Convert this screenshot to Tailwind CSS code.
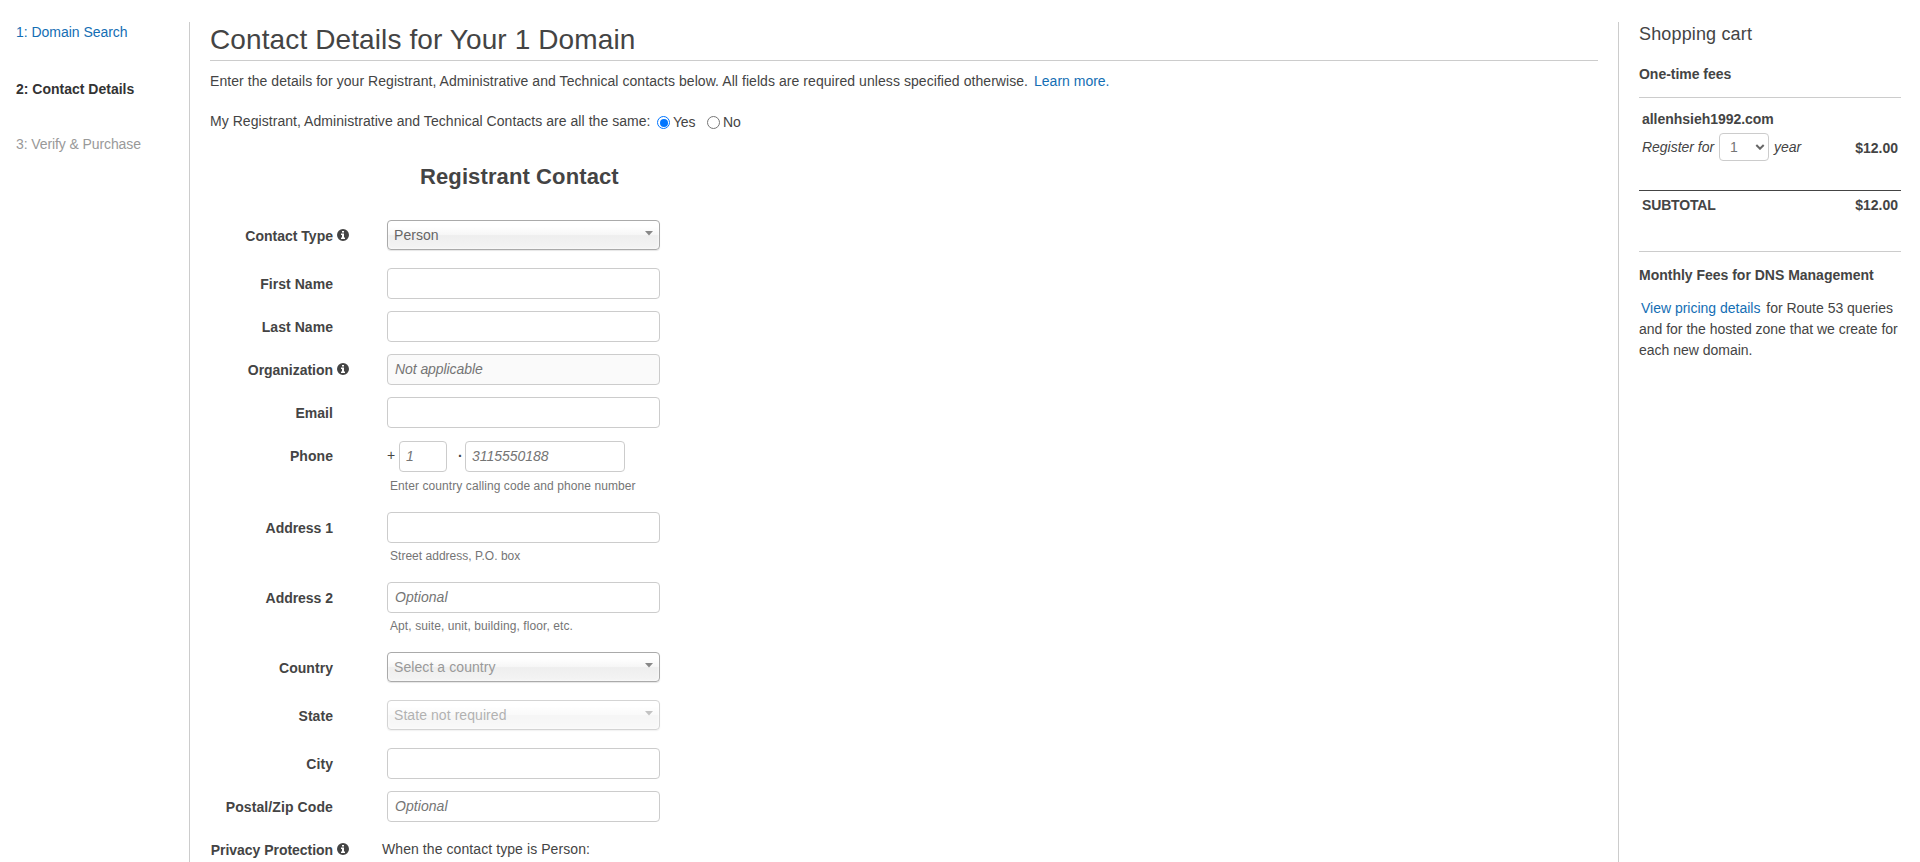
<!DOCTYPE html>
<html lang="en">
<head>
<meta charset="utf-8">
<title>Contact Details</title>
<script src="https://cdn.jsdelivr.net/npm/@tailwindcss/browser@4"></script>
</head>
<body class="bg-white">
<svg class="hidden">
  <symbol id="info" viewBox="0 0 12 12">
    <path fill-rule="evenodd" fill="#444" d="M6 0a6 6 0 1 0 0 12A6 6 0 0 0 6 0ZM5 2h2v1.500H5ZM4 4.500h3v4h1V10H4V8.500h1V6H4Z"/>
  </symbol>
</svg>
<div class="flex h-[862px] w-[1920px] overflow-hidden pt-[22px] text-[14px] leading-5 text-[#444] [font-family:'Liberation_Sans',Arial,sans-serif]">

  <nav class="flex w-[189px] shrink-0 flex-col pl-4">
    <a class="tracking-[-0.03px] text-[#146eb4]">1: Domain Search</a>
    <span class="mt-[37px] font-bold text-[#333]">2: Contact Details</span>
    <span class="mt-[35px] tracking-[-0.1px] text-[#999]">3: Verify &amp; Purchase</span>
  </nav>

  <main class="w-[1430px] shrink-0 border-x border-[#ccc] pr-5 pl-5">
    <h1 class="h-[39px] border-b border-[#ccc] pt-[2px] text-[28px] leading-8 tracking-[0.11px]">Contact Details for Your 1 Domain</h1>
    <p class="mt-[10px] tracking-[0.061px]">Enter the details for your Registrant, Administrative and Technical contacts below. All fields are required unless specified otherwise. <a class="ml-[2px] tracking-normal text-[#146eb4]">Learn more.</a></p>
    <div class="mt-5 flex h-5">
      <span class="w-[447px] tracking-[0.05px]">My Registrant, Administrative and Technical Contacts are all the same:</span>
      <span class="flex items-center pt-[3px]">
        <span class="flex size-[13px] items-center justify-center rounded-full border border-[#0075ff]"><span class="size-2 rounded-full bg-[#0075ff]"></span></span>
        <span class="-mt-px ml-[3px] w-[34px] tracking-[-0.2px]">Yes</span>
        <span class="size-[13px] rounded-full border border-[#767676]"></span>
        <span class="-mt-px ml-[3px]">No</span>
      </span>
    </div>
    <h2 class="mt-[34px] ml-[210px] h-[55px] text-[22px] leading-6 font-bold tracking-[0.11px]">Registrant Contact</h2>

    <form class="tracking-[0.05px]">
      <div class="flex h-12">
        <label class="w-[123px] text-right leading-[33px] font-bold tracking-normal">Contact Type</label>
        <svg class="mt-[9px] ml-[3.5px] size-3"><use href="#info"/></svg>
        <div class="ml-[38.5px] flex h-[30px] w-[273px] rounded-[4px] border border-[#aaa] bg-[linear-gradient(#fff_20%,#f6f6f6_50%,#eee_52%,#f4f4f4_100%)] pl-[6px] shadow-[inset_0_0_3px_#fff,0_1px_1px_rgba(0,0,0,0.1)]">
          <span class="w-[251px] leading-7 text-[#666]">Person</span>
          <svg class="mt-[10px] size-2" viewBox="0 0 8 8"><path fill="#888" d="M0 0h8L4 4.500Z"/></svg>
        </div>
      </div>
      <div class="flex h-[43px]">
        <label class="w-[123px] text-right leading-[33px] font-bold">First Name</label>
        <div class="ml-[54px] h-[31px] w-[273px] rounded-[4px] border border-[#ccc]"></div>
      </div>
      <div class="flex h-[43px]">
        <label class="w-[123px] text-right leading-[33px] font-bold">Last Name</label>
        <div class="ml-[54px] h-[31px] w-[273px] rounded-[4px] border border-[#ccc]"></div>
      </div>
      <div class="flex h-[43px]">
        <label class="w-[123px] text-right leading-[33px] font-bold tracking-[-0.03px]">Organization</label>
        <svg class="mt-[9px] ml-[3.5px] size-3"><use href="#info"/></svg>
        <div class="ml-[38.5px] h-[31px] w-[273px] rounded-[4px] border border-[#ccc] bg-[#fafafa] pl-[7px] leading-[29px] tracking-[-0.07px] text-[#757575] italic">Not applicable</div>
      </div>
      <div class="flex h-[44px]">
        <label class="w-[123px] text-right leading-[33px] font-bold">Email</label>
        <div class="ml-[54px] h-[31px] w-[273px] rounded-[4px] border border-[#ccc]"></div>
      </div>
      <div class="flex h-[71px]">
        <label class="w-[123px] text-right leading-[31px] font-bold">Phone</label>
        <div class="ml-[54px]">
          <div class="flex text-[#757575]">
            <span class="w-3 leading-[29px] text-[#444]">+</span>
            <div class="h-[31px] w-[48px] rounded-[4px] border border-[#ccc] pl-[6px] leading-[29px] italic">1</div>
            <span class="ml-[11px] w-[7px] leading-[31px] font-bold text-[#444]">·</span>
            <div class="h-[31px] w-[160px] rounded-[4px] border border-[#ccc] pl-[6px] leading-[29px] tracking-[-0.02px] italic">3115550188</div>
          </div>
          <div class="mt-1 ml-[3px] text-[12px] tracking-[0.08px] text-[#757575]">Enter country calling code and phone number</div>
        </div>
      </div>
      <div class="flex h-[70px]">
        <label class="w-[123px] text-right leading-[33px] font-bold tracking-[-0.03px]">Address 1</label>
        <div class="ml-[54px]">
          <div class="h-[31px] w-[273px] rounded-[4px] border border-[#ccc]"></div>
          <div class="mt-[3px] ml-[3px] text-[12px] tracking-[0.02px] text-[#757575]">Street address, P.O. box</div>
        </div>
      </div>
      <div class="flex h-[70px]">
        <label class="w-[123px] text-right leading-[33px] font-bold tracking-[-0.03px]">Address 2</label>
        <div class="ml-[54px]">
          <div class="h-[31px] w-[273px] rounded-[4px] border border-[#ccc] pl-[7px] leading-[29px] text-[#757575] italic">Optional</div>
          <div class="mt-[3px] ml-[3px] text-[12px] tracking-[0.09px] text-[#757575]">Apt, suite, unit, building, floor, etc.</div>
        </div>
      </div>
      <div class="flex h-12">
        <label class="w-[123px] text-right leading-[33px] font-bold">Country</label>
        <div class="ml-[54px] flex h-[30px] w-[273px] rounded-[4px] border border-[#aaa] bg-[linear-gradient(#fff_20%,#f6f6f6_50%,#eee_52%,#f4f4f4_100%)] pl-[6px] shadow-[inset_0_0_3px_#fff,0_1px_1px_rgba(0,0,0,0.1)]">
          <span class="w-[251px] leading-7 tracking-[0.08px] text-[#999]">Select a country</span>
          <svg class="mt-[10px] size-2" viewBox="0 0 8 8"><path fill="#888" d="M0 0h8L4 4.500Z"/></svg>
        </div>
      </div>
      <div class="flex h-12">
        <label class="w-[123px] text-right leading-[33px] font-bold">State</label>
        <div class="ml-[54px] flex h-[30px] w-[273px] rounded-[4px] border border-[#aaa] bg-[linear-gradient(#fff_20%,#f6f6f6_50%,#eee_52%,#f4f4f4_100%)] pl-[6px] opacity-50 shadow-[inset_0_0_3px_#fff,0_1px_1px_rgba(0,0,0,0.1)]">
          <span class="w-[251px] leading-7 tracking-[0.07px] text-[#666]">State not required</span>
          <svg class="mt-[10px] size-2" viewBox="0 0 8 8"><path fill="#888" d="M0 0h8L4 4.500Z"/></svg>
        </div>
      </div>
      <div class="flex h-[43px]">
        <label class="w-[123px] text-right leading-[33px] font-bold">City</label>
        <div class="ml-[54px] h-[31px] w-[273px] rounded-[4px] border border-[#ccc]"></div>
      </div>
      <div class="flex h-[43px]">
        <label class="w-[123px] text-right leading-[33px] font-bold tracking-[0.1px]">Postal/Zip Code</label>
        <div class="ml-[54px] h-[31px] w-[273px] rounded-[4px] border border-[#ccc] pl-[7px] leading-[29px] text-[#757575] italic">Optional</div>
      </div>
      <div class="flex">
        <label class="w-[123px] text-right leading-[33px] font-bold tracking-[-0.04px]">Privacy Protection</label>
        <svg class="mt-[9px] ml-[3.5px] size-3"><use href="#info"/></svg>
        <span class="ml-[33.5px] leading-[31px] tracking-[0.08px]">When the contact type is Person:</span>
      </div>
    </form>
  </main>

  <aside class="ml-5 w-[262px] shrink-0">
    <h3 class="pt-[2px] text-[18px] leading-5 tracking-[0.15px]">Shopping cart</h3>
    <h4 class="mt-5 h-[34px] border-b border-[#ccc] font-bold tracking-[-0.03px]">One-time fees</h4>
    <div class="mt-[11px] pl-[3px] font-bold tracking-[-0.03px]">allenhsieh1992.com</div>
    <div class="mt-1 flex h-[57px] pr-[3px] pl-[3px] italic">
      <span class="w-[77px] leading-7 tracking-[-0.02px]">Register for</span>
      <span class="flex h-7 w-[50px] items-center justify-between rounded-[4px] border border-[#ccc] pr-[3px] pl-[10px] text-[#757575] not-italic">1
        <svg class="h-[6px] w-[10px]" viewBox="0 0 10 6"><path d="M1.300 1L5 4.700L8.700 1" fill="none" stroke="#666" stroke-width="2"/></svg>
      </span>
      <span class="ml-[5px] leading-7">year</span>
      <span class="ml-auto leading-[31px] font-bold not-italic">$12.00</span>
    </div>
    <div class="flex h-[61px] justify-between border-t border-[#444] px-[3px] pt-1 font-bold"><span class="tracking-[-0.15px]">SUBTOTAL</span><span>$12.00</span></div>
    <h4 class="border-t border-[#ccc] pt-[13px] font-bold tracking-[-0.01px]">Monthly Fees for DNS Management</h4>
    <p class="mt-[13px] leading-[21px] tracking-[-0.01px]"><a class="mx-[2px] text-[#146eb4]">View pricing details</a> for Route 53 queries<br>and for the hosted zone that we create for<br>each new domain.</p>
  </aside>
</div>
</body>
</html>
